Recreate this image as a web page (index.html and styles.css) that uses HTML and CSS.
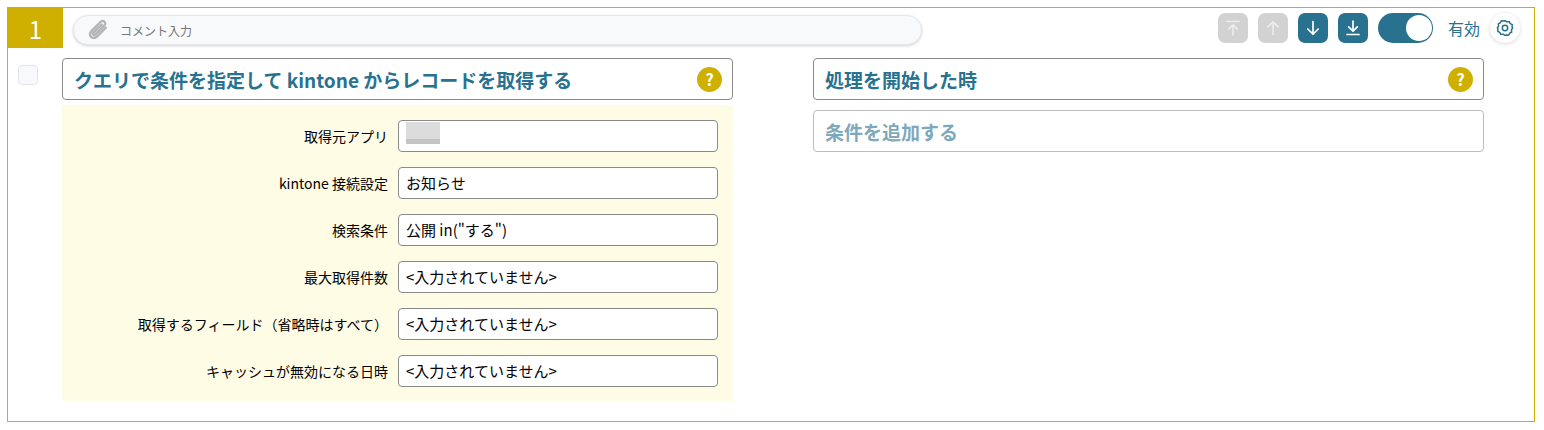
FILE: index.html
```html
<!DOCTYPE html>
<html lang="ja">
<head>
    <meta charset="utf-8"/>
    <title>kintone レコード取得</title>
    <link rel="stylesheet" href="styles.css">
</head>
<body>
<div class="stepBox">
    <div class="stepHead">
        <div class="stepNo">1</div>
        <div class="commentBox">
            <svg class="commentIcon" width="22" height="22" viewBox="0 0 24 24" fill="none" stroke="#b5b5b5" stroke-width="2.6" stroke-linecap="round" stroke-linejoin="round">
                <path d="M20.5 9.5 10.5 19.5a4.2 4.2 0 0 1-6-6L15 3a2.8 2.8 0 0 1 4 4L8.8 17.2a1.4 1.4 0 0 1-2-2L16 6"/>
            </svg>
            <span class="commentText">コメント入力</span>
        </div>
        <div class="tools">
            <span class="toolBtn off">
                <svg width="18" height="18" viewBox="0 0 18 18" fill="none" stroke="#ececec" stroke-width="1.7" stroke-linecap="round" stroke-linejoin="round"><path d="M3 2.5h12M9 16V6M4.7 10.2 9 5.9l4.3 4.3"/></svg>
            </span>
            <span class="toolBtn off">
                <svg width="18" height="18" viewBox="0 0 18 18" fill="none" stroke="#ececec" stroke-width="1.7" stroke-linecap="round" stroke-linejoin="round"><path d="M9 15.5V2.8M3.8 8 9 2.8 14.2 8"/></svg>
            </span>
            <span class="toolBtn">
                <svg width="18" height="18" viewBox="0 0 18 18" fill="none" stroke="#fff" stroke-width="1.7" stroke-linecap="round" stroke-linejoin="round"><path d="M9 2.5v12.7M3.8 10 9 15.2 14.2 10"/></svg>
            </span>
            <span class="toolBtn">
                <svg width="18" height="18" viewBox="0 0 18 18" fill="none" stroke="#fff" stroke-width="1.7" stroke-linecap="round" stroke-linejoin="round"><path d="M9 2v10M4.7 7.8 9 12.1l4.3-4.3M3 15.5h12"/></svg>
            </span>
            <span class="toggle"><span class="toggleKnob"></span></span>
            <span class="toggleText">有効</span>
            <span class="gearBtn">
                <svg width="18" height="18" viewBox="0 0 24 24" fill="none" stroke="#29728f" stroke-width="2" stroke-linejoin="round"><path d="M12 2.2l2.6 1.6 3-.3 1.4 2.7 2.7 1.4-.3 3L22.2 12l-1.6 2.6.3 3-2.7 1.4-1.4 2.7-3-.3L12 21.8l-2.6-1.6-3 .3-1.4-2.7-2.7-1.4.3-3L1.800 12l1.600-2.600-.3-3 2.700-1.400 1.400-2.700 3 .3z"/><circle cx="12" cy="12" r="3.6"/></svg>
            </span>
        </div>
    </div>
    <div class="stepBody">
        <div class="checkCol"><span class="checkBox"></span></div>
        <div class="leftCol">
            <div class="titleBox">
                <span>クエリで条件を指定して kintone からレコードを取得する</span>
                <span class="helpMark">?</span>
            </div>
            <div class="formPanel">
                <div class="formRow">
                    <label>取得元アプリ</label>
                    <div class="formValue"><span class="blurred"></span></div>
                </div>
                <div class="formRow">
                    <label>kintone 接続設定</label>
                    <div class="formValue">お知らせ</div>
                </div>
                <div class="formRow">
                    <label>検索条件</label>
                    <div class="formValue">公開 in("する")</div>
                </div>
                <div class="formRow">
                    <label>最大取得件数</label>
                    <div class="formValue">&lt;入力されていません&gt;</div>
                </div>
                <div class="formRow">
                    <label>取得するフィールド（省略時はすべて）</label>
                    <div class="formValue">&lt;入力されていません&gt;</div>
                </div>
                <div class="formRow">
                    <label>キャッシュが無効になる日時</label>
                    <div class="formValue">&lt;入力されていません&gt;</div>
                </div>
            </div>
        </div>
        <div class="rightCol">
            <div class="titleBox">
                <span>処理を開始した時</span>
                <span class="helpMark">?</span>
            </div>
            <div class="titleBox addBox">条件を追加する</div>
        </div>
    </div>
</div>
</body>
</html>
```

FILE: styles.css
```css
* {
    margin: 0;
    padding: 0;
    box-sizing: border-box;
}

body {
    margin: 7px 9px 8px 7px;
    background: #fff;
    font-family: "Noto Sans CJK JP", "Noto Sans", sans-serif;
    color: #000;
}

.stepBox {
    height: 415px;
    border: 1px solid #cfb000;
}

.stepHead {
    display: flex;
    align-items: flex-start;
    height: 50px;
}

.stepNo {
    width: 55px;
    height: 40px;
    background: #cfb000;
    color: #fff;
    font-size: 24px;
    line-height: 42px;
    text-align: center;
}

.commentBox {
    display: flex;
    align-items: center;
    width: 849px;
    height: 30px;
    margin: 7px 0 0 10px;
    padding-left: 13px;
    border-radius: 15px;
    border: 1px solid #e6e8ec;
    background: #f8f9fb;
    box-shadow: 0 1px 3px rgba(0, 0, 0, .18);
}

.commentText {
    margin-left: 11px;
    font-size: 12px;
    color: #777;
}

.tools {
    display: flex;
    align-items: center;
    gap: 10px;
    margin: 5px 0 0 auto;
    padding-right: 14px;
}

.toolBtn {
    display: flex;
    align-items: center;
    justify-content: center;
    width: 30px;
    height: 30px;
    border-radius: 7px;
    background: #29728f;
}

.toolBtn.off {
    background: #d2d2d2;
}

.toggle {
    display: flex;
    justify-content: flex-end;
    align-items: center;
    width: 55px;
    height: 30px;
    padding-right: 1px;
    border-radius: 15px;
    background: #29728f;
}

.toggleKnob {
    width: 26px;
    height: 26px;
    border-radius: 50%;
    background: #fff;
}

.toggleText {
    margin-left: 5px;
    font-size: 16px;
    color: #29728f;
}

.gearBtn {
    display: flex;
    align-items: center;
    justify-content: center;
    width: 30px;
    height: 30px;
    border-radius: 50%;
    background: #fff;
    box-shadow: 0 1px 4px rgba(0, 0, 0, .15);
}

.stepBody {
    display: flex;
    align-items: flex-start;
}

.checkCol {
    width: 54px;
    padding: 7px 0 0 10px;
}

.checkBox {
    display: block;
    width: 20px;
    height: 20px;
    border: 1px solid #e3e5ea;
    border-radius: 4px;
    background: #f8f9fb;
}

.leftCol {
    width: 671px;
}

.rightCol {
    width: 671px;
    margin-left: 80px;
}

.titleBox {
    display: flex;
    align-items: center;
    justify-content: space-between;
    height: 42px;
    padding: 0 10px 0 11px;
    border: 1px solid #8a8a8a;
    border-radius: 4px;
    background: #fff;
    font-size: 19px;
    font-weight: 700;
    color: #29728f;
}

.addBox {
    margin-top: 10px;
    border-color: #bdbdbd;
    color: #7fa9ba;
}

.helpMark {
    width: 25px;
    height: 25px;
    border-radius: 50%;
    background: #cfb000;
    color: #fff;
    font-size: 16px;
    line-height: 25px;
    text-align: center;
}

.formPanel {
    height: 296px;
    margin-top: 5px;
    padding: 15px 15px 0 0;
    background: #fffce6;
}

.formRow {
    display: flex;
    align-items: center;
    justify-content: flex-end;
    height: 32px;
    margin-bottom: 15px;
}

.formRow label {
    margin-right: 10px;
    font-size: 14px;
}

.formValue {
    width: 320px;
    height: 32px;
    padding-left: 7px;
    border: 1px solid #8a8a8a;
    border-radius: 4px;
    background: #fff;
    font-size: 15px;
    line-height: 30px;
}

.blurred {
    display: block;
    width: 34px;
    height: 22px;
    margin-top: 1px;
    background: linear-gradient(#dcdcdc 17px, #c4c4c4 17px);
}
```
